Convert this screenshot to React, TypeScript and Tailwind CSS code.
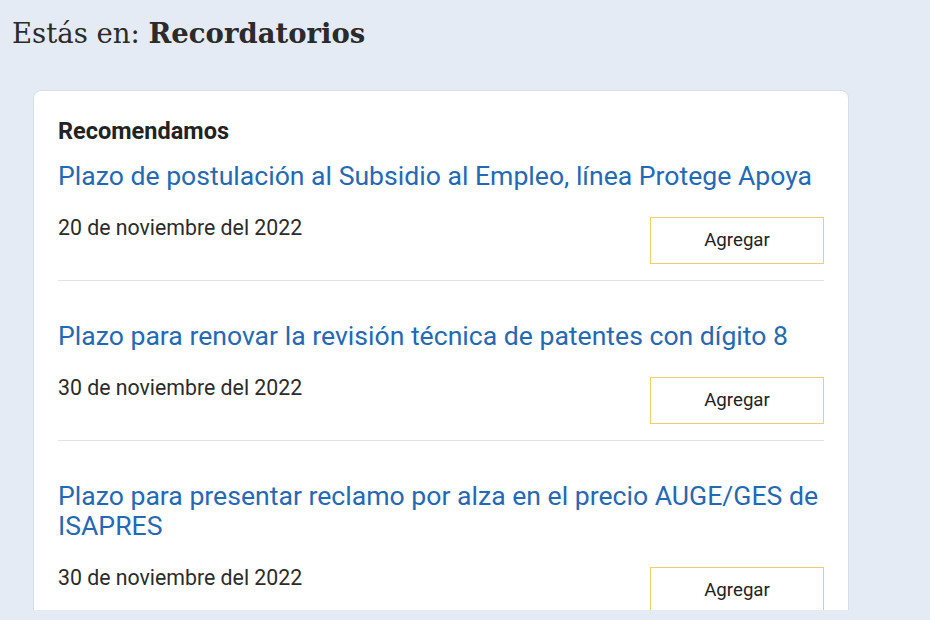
import React from 'react';

const items = [
  { title: 'Plazo de postulación al Subsidio al Empleo, línea Protege Apoya', date: '20 de noviembre del 2022' },
  { title: 'Plazo para renovar la revisión técnica de patentes con dígito 8', date: '30 de noviembre del 2022' },
  { title: 'Plazo para presentar reclamo por alza en el precio AUGE/GES de ISAPRES', date: '30 de noviembre del 2022' },
];

export default function App() {
  return (
    <div className="h-[620px] w-[930px] overflow-hidden bg-[#e4ebf5] font-['Roboto',sans-serif]">
      {/* Migas */}
      <h1 className="pl-3 pt-[15px] text-[27.5px] leading-[36px] text-[#2b2b2b] font-['DejaVu_Serif',serif]">
        Estás en: <span className="font-bold">Recordatorios</span>
      </h1>

      <div className="ml-[33px] mt-[39px] h-[520px] w-[816px] overflow-hidden">
        <div className="rounded-lg border border-[#d8dee8] bg-white px-[24px] pt-[26px]">
          <h2 className="mb-4 text-[23.5px] font-bold leading-[28px] text-[#222]">Recomendamos</h2>
          {items.map((item, i) => (
            <div
              key={i}
              className={
                'border-b border-[#e2e2e2] pb-[16px] ' + (i === 0 ? '' : 'pt-[40px]')
              }
            >
              <a className="block text-[26.6px] leading-[30px] text-[#2569b5]">{item.title}</a>
              <div className="mt-[26px] flex items-start justify-between">
                <p className="text-[21.3px] leading-[22px] text-[#2b2b2b]">{item.date}</p>
                <button className="h-[47px] w-[174px] border border-[#ecd06a] bg-white text-[18.7px] text-[#222]">
                  Agregar
                </button>
              </div>
            </div>
          ))}
        </div>
      </div>
    </div>
  );
}
